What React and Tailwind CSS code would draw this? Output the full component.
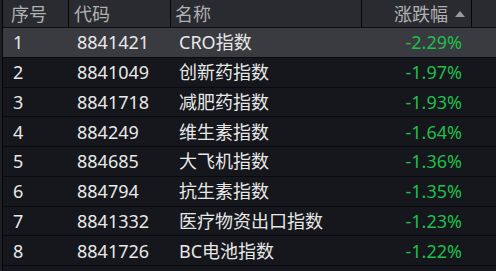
import React from 'react';

const rows = [
  { no: 1, code: '8841421', name: 'CRO指数', pct: '-2.29%' },
  { no: 2, code: '8841049', name: '创新药指数', pct: '-1.97%' },
  { no: 3, code: '8841718', name: '减肥药指数', pct: '-1.93%' },
  { no: 4, code: '884249', name: '维生素指数', pct: '-1.64%' },
  { no: 5, code: '884685', name: '大飞机指数', pct: '-1.36%' },
  { no: 6, code: '884794', name: '抗生素指数', pct: '-1.35%' },
  { no: 7, code: '8841332', name: '医疗物资出口指数', pct: '-1.23%' },
  { no: 8, code: '8841726', name: 'BC电池指数', pct: '-1.22%' },
];

export default function App() {
  return (
    <div
      className="w-[496px] h-[271px] overflow-hidden bg-[#15171c] flex text-[18px] leading-none"
      style={{ fontFamily: '"Noto Sans", "Noto Sans CJK SC", sans-serif' }}
    >
      {/* left edge strip */}
      <div className="w-[2px] bg-[#1d1f24]" />
      <div className="w-[1px] bg-[#050607]" />

      <div className="flex-1 flex flex-col">
        {/* Header */}
        <div className="h-[28px] flex bg-[#2a2b30] text-[#b0b0b2] border-b border-[#0d0e11]">
          <div className="w-[66px] pl-[8px] flex items-center border-r border-[#050607]">序号</div>
          <div className="w-[102px] pl-[5px] flex items-center border-r border-[#050607]">代码</div>
          <div className="w-[191px] pl-[4px] flex items-center border-r border-[#050607]">名称</div>
          <div className="w-[110px] flex items-center justify-end pr-[6px] border-r border-[#050607]">
            <span>涨跌幅</span>
            <span className="ml-[7px] w-0 h-0 border-l-[5px] border-r-[5px] border-b-[6px] border-l-transparent border-r-transparent border-b-[#9a9a9c]" />
          </div>
          <div className="flex-1" />
        </div>

        {/* Rows */}
        {rows.map((r, i) => (
          <div
            key={r.no}
            className={`h-[29.75px] flex items-center border-b border-[#0a0b0e] ${
              i === 0 ? 'bg-[#3a3b40]' : 'bg-[#15171c]'
            }`}
          >
            <div className="w-[66px] pl-[10px] text-[#e8e8e8]">{r.no}</div>
            <div className="w-[102px] pl-[8px] text-[#e8e8e8]">{r.code}</div>
            <div className="w-[191px] pl-[8px] text-[#e8e8e8]">{r.name}</div>
            <div className="w-[100px] text-right text-[#1fbf4a]">{r.pct}</div>
          </div>
        ))}
      </div>
    </div>
  );
}
